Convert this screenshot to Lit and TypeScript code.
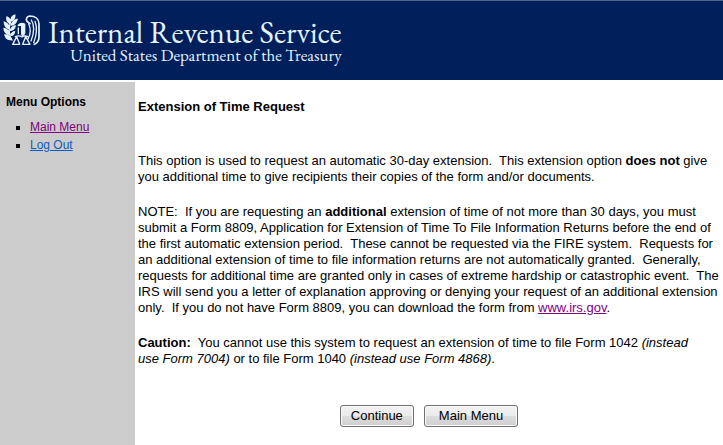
import { LitElement, html, css } from "lit";
import { customElement } from "lit/decorators.js";

@customElement("irs-emblem")
class IrsEmblem extends LitElement {
  static styles = css`
    :host { display: block; flex: none; width: 37px; height: 33px; }
    svg { display: block; width: 100%; height: 100%; }
    .leaf { fill: #e6f3ff; }
    .line { fill: none; stroke: #e6f3ff; stroke-width: 5; stroke-linecap: round; stroke-linejoin: round; }
    .thin { stroke-width: 4; }
  `;
  render() {
    return html`<svg viewBox="9 42 111 99" aria-hidden="true">
      <path class="leaf" d="M46 43C35 46 29 54 32 66C43 62 48 54 46 43Z M20 48C16 59 20 68 31 73C36 62 31 53 20 48Z M54 56C43 56 34 64 31 77C44 77 51 69 54 56Z M11 64C11 78 18 87 30 89C31 77 23 67 11 64Z M48 76C39 76 31 82 29 93C40 94 46 88 48 76Z M10 83C10 97 19 105 32 105C31 93 22 84 10 83Z M46 93C38 93 32 98 31 108C39 110 45 103 46 93Z M12 103C15 117 23 123 36 120C33 108 25 102 12 103Z"/>
      <path class="line thin" d="M31 66C25 88 27 110 36 120"/>
      <path class="line" d="M103 133C112 129 117 122 117 111V72C117 57 106 48 89 48C80 49 77 56 81 64L90 71"/>
      <path class="leaf" d="M52 79C54 69 65 65 76 71V97C76 104 72 107 67 109C63 107 63 103 63 97V78Z"/>
      <path class="line thin" d="M86 71C93 86 91 104 84 117M94 60C104 76 102 100 93 123M105 64C112 80 110 108 101 128M55 84V101"/>
      <path class="line thin" d="M46 110C53 107 60 107 66 111C72 107 78 107 83 110M50 110L38 133H59L50 110M77 110L68 133H90L77 110"/>
    </svg>`;
  }
}

@customElement("app-root")
class AppRoot extends LitElement {
  static styles = css`
    :host {
      display: flex;
      flex-direction: column;
      min-height: 100vh;
      background: #fff;
      color: #000;
      font-family: "Liberation Sans", Arial, sans-serif;
      font-size: 13px;
      line-height: 16px;
    }
    .banner {
      display: flex;
      align-items: flex-start;
      gap: 8px;
      box-sizing: border-box;
      height: 80px;
      padding: 13px 3px 0;
      border-top: 1px solid #4d668c;
      background: #001f5b;
      color: #e6f3ff;
      font-family: "EB Garamond", Garamond, "Liberation Serif", serif;
    }
    .brand { display: flex; flex-direction: column; align-items: flex-end; padding-top: 4px; white-space: nowrap; }
    .name { font-size: 31px; line-height: 28px; }
    .dept { font-size: 17px; line-height: 18px; }
    .body { display: flex; flex: 1; margin-top: 2px; }
    .side { flex: none; box-sizing: border-box; width: 135px; padding: 12px 6px; background: #ccc; }
    h2 { margin: 0; font-size: 12px; line-height: 16px; }
    ul { margin: 8px 0 0; padding: 0 0 0 24px; list-style: square; font-size: 12px; line-height: 18px; }
    .visited { color: #800080; }
    .fresh { color: #0d5cbf; }
    main { flex: 1; min-width: 0; padding: 17px 3px; }
    h1 { margin: 0 0 38px; font-size: 13px; line-height: 16px; }
    p { margin: 0 0 19px; }
    .keep { white-space: nowrap; }
    .actions { display: flex; justify-content: center; gap: 10px; margin-top: 38px; }
    button {
      box-sizing: border-box;
      height: 22px;
      padding: 0 10px;
      border: 1px solid #707070;
      border-radius: 3px;
      background: linear-gradient(#f2f2f2 0%, #ebebeb 50%, #dddddd 50%, #cfcfcf 100%);
      box-shadow: inset 0 0 0 1px #fafafa;
      color: #000;
      font: inherit;
    }
    .wide { padding: 0 14px; }
  `;
  render() {
    return html`
      <header class="banner">
        <irs-emblem></irs-emblem>
        <div class="brand">
          <span class="name">Internal Revenue Service</span>
          <span class="dept">United States Department of the Treasury</span>
        </div>
      </header>
      <div class="body">
        <nav class="side">
          <h2>Menu Options</h2>
          <ul>
            <li><a class="visited" href="#menu">Main Menu</a></li>
            <li><a class="fresh" href="#logout">Log Out</a></li>
          </ul>
        </nav>
        <main>
          <h1>Extension of Time Request</h1>
          <p>This option is used to request an automatic 30-day extension.&nbsp; This extension option <b>does not</b> give
            you additional time to give recipients their copies of the form and/or documents.</p>
          <p>NOTE:&nbsp; If you are requesting an <b>additional</b> extension of time of not more than 30 days, you must
            submit a Form 8809, Application for Extension of Time To File Information Returns before the end of
            the first automatic extension period.&nbsp; These cannot be requested via the FIRE system.&nbsp; Requests for
            an additional extension of time to file information returns are not automatically granted.&nbsp; Generally,
            requests for additional time are granted only in cases of extreme hardship or catastrophic event.&nbsp; The
            IRS will send you a letter of explanation approving or denying your request of an additional extension
            only.&nbsp; If you do not have Form 8809, you can download the form from <a class="visited" href="#irs">www.irs.gov</a>.</p>
          <p><b>Caution:</b>&nbsp; You cannot use this system to request an extension of time to file Form 1042 <i>(instead
            <span class="keep">use Form 7004)</span></i> or to file Form 1040 <i>(instead use Form 4868)</i>.</p>
          <div class="actions">
            <button type="button">Continue</button>
            <button type="button" class="wide">Main Menu</button>
          </div>
        </main>
      </div>
    `;
  }
}
